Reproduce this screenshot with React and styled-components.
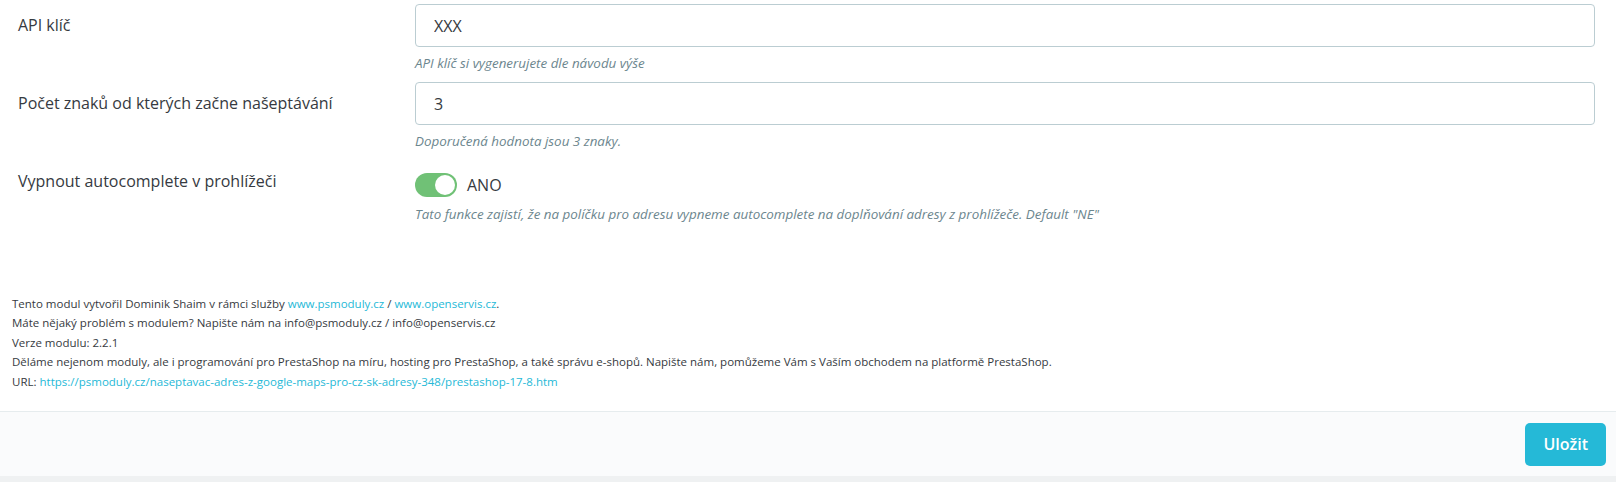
import React from "react";
import styled, { createGlobalStyle } from "styled-components";

const Global = createGlobalStyle`
  html, body { margin: 0; padding: 0; }
  body {
    background: #eff1f2;
    font-family: "Open Sans", "Noto Sans", sans-serif;
    color: #363a41;
  }
`;

const Panel = styled.div`
  background: #ffffff;
  box-shadow: 0 1px 2px rgba(0, 0, 0, 0.1);
`;

const Form = styled.div`
  display: flex;
  flex-direction: column;
  gap: 9px;
  padding: 4px 21px 0 0;
`;

const Row = styled.div`
  display: grid;
  grid-template-columns: 415px 1fr;
`;

const Label = styled.div`
  padding: 9px 0 0 18px;
  font-size: 16px;
  line-height: 24px;
  color: #363a41;
`;

const Field = styled.div`
  display: flex;
  flex-direction: column;
`;

const Input = styled.input`
  box-sizing: border-box;
  height: 43px;
  width: 100%;
  border: 1px solid #bbcdd2;
  border-radius: 4px;
  padding: 0 18px;
  font-family: "Open Sans", sans-serif;
  font-size: 16px;
  color: #363a41;
  background: #fff;
  outline: none;
`;

const Help = styled.div`
  margin-top: 6px;
  font-size: 13.4px;
  line-height: 20px;
  font-style: italic;
  color: #6c868e;
`;

const SwitchLine = styled.div`
  display: flex;
  align-items: center;
  gap: 10px;
  height: 26px;
  padding-top: 12px;
`;

const Track = styled.span`
  position: relative;
  width: 42px;
  height: 24px;
  border-radius: 12px;
  background: ${(p) => (p.$on ? "#70c176" : "#bbcdd2")};
  flex-shrink: 0;
`;

const Knob = styled.span`
  position: absolute;
  top: 2px;
  ${(p) => (p.$on ? "right: 2px;" : "left: 2px;")}
  width: 20px;
  height: 20px;
  border-radius: 50%;
  background: #fff;
`;

const SwitchText = styled.span`
  font-size: 16px;
  color: #363a41;
`;

const Info = styled.div`
  margin-top: 70px;
  padding: 0 12px 20px;
  font-size: 11.5px;
  line-height: 19.4px;
  color: #363a41;
`;

const Link = styled.a`
  color: #25b9d7;
  text-decoration: none;
`;

const Footer = styled.div`
  display: flex;
  justify-content: flex-end;
  align-items: center;
  height: 64px;
  padding: 0 10px;
  background: #fafbfc;
  border-top: 1px solid #e6ecee;
`;

const SaveButton = styled.button`
  height: 43px;
  padding: 0 18px;
  border: none;
  border-radius: 5px;
  background: #25b9d7;
  color: #fff;
  font-family: "Open Sans", sans-serif;
  font-size: 16px;
  font-weight: 600;
  cursor: pointer;
`;

export default function App() {
  return (
    <>
      <Global />
      <Panel>
        <Form>
          <Row>
            <Label>API klíč</Label>
            <Field>
              <Input defaultValue="XXX" />
              <Help>API klíč si vygenerujete dle návodu výše</Help>
            </Field>
          </Row>
          <Row>
            <Label>Počet znaků od kterých začne našeptávání</Label>
            <Field>
              <Input defaultValue="3" />
              <Help>Doporučená hodnota jsou 3 znaky.</Help>
            </Field>
          </Row>
          <Row>
            <Label>Vypnout autocomplete v prohlížeči</Label>
            <Field>
              <SwitchLine>
                <Track $on>
                  <Knob $on />
                </Track>
                <SwitchText>ANO</SwitchText>
              </SwitchLine>
              <Help>
                Tato funkce zajistí, že na políčku pro adresu vypneme autocomplete na doplňování adresy z prohlížeče. Default "NE"
              </Help>
            </Field>
          </Row>
        </Form>
        <Info>
          <div>
            Tento modul vytvořil Dominik Shaim v rámci služby{" "}
            <Link href="#">www.psmoduly.cz</Link> / <Link href="#">www.openservis.cz</Link>.
          </div>
          <div>Máte nějaký problém s modulem? Napište nám na info@psmoduly.cz / info@openservis.cz</div>
          <div>Verze modulu: 2.2.1</div>
          <div>
            Děláme nejenom moduly, ale i programování pro PrestaShop na míru, hosting pro PrestaShop, a také správu e-shopů. Napište nám, pomůžeme Vám s Vaším obchodem na platformě PrestaShop.
          </div>
          <div>
            URL:{" "}
            <Link href="#">https://psmoduly.cz/naseptavac-adres-z-google-maps-pro-cz-sk-adresy-348/prestashop-17-8.htm</Link>
          </div>
        </Info>
        <Footer>
          <SaveButton>Uložit</SaveButton>
        </Footer>
      </Panel>
    </>
  );
}
